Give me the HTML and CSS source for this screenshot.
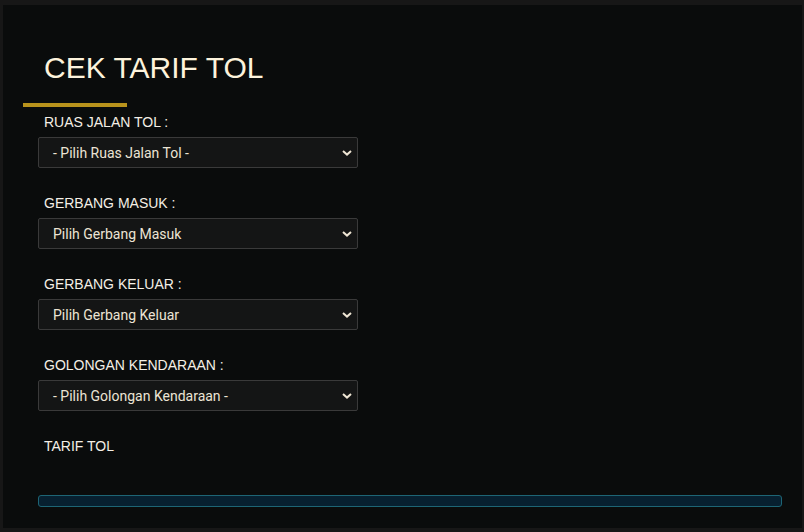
FILE: index.html
```html
<!DOCTYPE html>
<html lang="id">
<head>
<meta charset="utf-8">
<title>Cek Tarif Tol</title>
<link rel="stylesheet" href="styles.css">
</head>
<body>
<div class="panel">
  <h1 class="title">CEK TARIF TOL</h1>
  <div class="accent"></div>
  <form class="form">
    <div class="group">
      <label class="label">RUAS JALAN TOL :</label>
      <div class="select">
        <span>- Pilih Ruas Jalan Tol -</span>
        <svg class="chev" width="10" height="6" viewBox="0 0 10 6"><path d="M1 1 L5 4.6 L9 1" fill="none" stroke="#efe6d4" stroke-width="2"/></svg>
      </div>
    </div>
    <div class="group">
      <label class="label">GERBANG MASUK :</label>
      <div class="select">
        <span>Pilih Gerbang Masuk</span>
        <svg class="chev" width="10" height="6" viewBox="0 0 10 6"><path d="M1 1 L5 4.6 L9 1" fill="none" stroke="#efe6d4" stroke-width="2"/></svg>
      </div>
    </div>
    <div class="group">
      <label class="label">GERBANG KELUAR :</label>
      <div class="select">
        <span>Pilih Gerbang Keluar</span>
        <svg class="chev" width="10" height="6" viewBox="0 0 10 6"><path d="M1 1 L5 4.6 L9 1" fill="none" stroke="#efe6d4" stroke-width="2"/></svg>
      </div>
    </div>
    <div class="group">
      <label class="label">GOLONGAN KENDARAAN :</label>
      <div class="select">
        <span>- Pilih Golongan Kendaraan -</span>
        <svg class="chev" width="10" height="6" viewBox="0 0 10 6"><path d="M1 1 L5 4.6 L9 1" fill="none" stroke="#efe6d4" stroke-width="2"/></svg>
      </div>
    </div>
    <div class="group">
      <label class="label">TARIF TOL</label>
    </div>
  </form>
  <div class="result"></div>
</div>
</body>
</html>
```
FILE: styles.css
```css
* { box-sizing: border-box; }
html, body { margin: 0; padding: 0; }
body {
  background: #171717;
  width: 804px;
  height: 532px;
  padding: 5px 2px 4px 3px;
  font-family: "Liberation Sans", Arial, sans-serif;
}
.panel {
  background: #0a0c0c;
  height: 523px;
  padding: 45px 20px 0 35px;
}
.title {
  margin: 0 0 0 6px;
  font-weight: normal;
  font-size: 30px;
  line-height: 35px;
  color: #fdf3dc;
}
.accent {
  width: 104px;
  height: 4px;
  background: #b8931c;
  margin: 18px 0 0 -15px;
}
.form {
  display: flex;
  flex-direction: column;
  gap: 27px;
  margin-top: 7px;
}
.group {
  display: flex;
  flex-direction: column;
  gap: 7px;
}
.label {
  display: block;
  margin-left: 6px;
  font-size: 14px;
  line-height: 16px;
  color: #f4efe6;
}
.select {
  width: 320px;
  height: 31px;
  border: 1px solid #3a3a3a;
  border-radius: 2px;
  background: #141515;
  display: flex;
  align-items: center;
  justify-content: space-between;
  padding: 0 5px 0 14px;
  font-family: Roboto, "Liberation Sans", sans-serif;
  font-size: 14px;
  color: #ece4d4;
}
.chev { display: block; margin-top: 1px; }
.result {
  margin-top: 41px;
  width: 744px;
  height: 12px;
  border: 1px solid #1d6575;
  border-radius: 3px;
  background: #072030;
}
```
